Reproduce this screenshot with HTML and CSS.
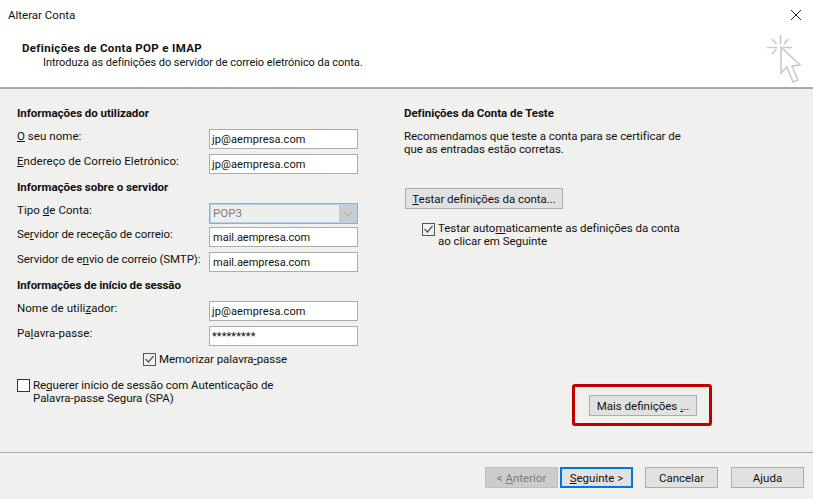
FILE: index.html
```html
<!DOCTYPE html>
<html lang="pt">
<head>
<meta charset="utf-8">
<title>Alterar Conta</title>
<link rel="stylesheet" href="styles.css">
</head>
<body>
<div class="dialog">
  <header class="header">
    <div class="titlebar">
      <span class="title">Alterar Conta</span>
      <svg class="close" width="12" height="12" viewBox="0 0 12 12"><path d="M1 1l10 10M11 1L1 11" stroke="#222" stroke-width="1" fill="none"/></svg>
    </div>
    <div class="head-row">
      <div class="head-text">
        <div class="head-title">Definições de Conta POP e IMAP</div>
        <div class="head-sub">Introduza as definições do servidor de correio eletrónico da conta.</div>
      </div>
      <svg class="wizard" width="36" height="52" viewBox="0 0 36 52">
        <g stroke="#c9c9c9" stroke-width="1.6" fill="none">
          <path d="M13.5 0v9M0 12.5h10M16 12.5h9M5 4l4.500 5M21 4l-4 5M5 19l4.500-5"/>
          <path d="M14 12V38l6-6 6 15 5-2-6-14 8-1z" stroke-linejoin="miter"/>
        </g>
      </svg>
    </div>
  </header>
  <main class="main">
    <section class="col-left">
      <h2 class="sec sec-1">Informações do utilizador</h2>
      <div class="row row-a"><label class="lab"><u>O</u> seu nome:</label><div class="field">jp@aempresa.com</div></div>
      <div class="row"><label class="lab"><u>E</u>ndereço de Correio Eletrónico:</label><div class="field">jp@aempresa.com</div></div>
      <h2 class="sec sec-2">Informações sobre o servidor</h2>
      <div class="row row-combo"><label class="lab">Tipo <u>d</u>e Conta:</label>
        <div class="combo"><span class="combo-val">POP3</span><span class="combo-btn"><svg width="10" height="6" viewBox="0 0 10 6"><path d="M1 1l4 4 4-4" stroke="#a8a8a8" fill="none"/></svg></span></div>
      </div>
      <div class="row row-b"><label class="lab tight">Se<u>r</u>vidor de receção de correio:</label><div class="field pad">mail.aempresa.com</div></div>
      <div class="row"><label class="lab tight">Servidor de e<u>n</u>vio de correio (SMTP):</label><div class="field pad">mail.aempresa.com</div></div>
      <h2 class="sec sec-3">Informações de início de sessão</h2>
      <div class="row row-c"><label class="lab">Nome de utili<u>z</u>ador:</label><div class="field">jp@aempresa.com</div></div>
      <div class="row"><label class="lab">Pa<u>l</u>avra-passe:</label><div class="field">*********</div></div>
      <div class="check check-mem"><span class="box"><svg width="11" height="11" viewBox="0 0 11 11"><path d="M1.5 5l3 3 5-6" stroke="#555" stroke-width="1.2" fill="none"/></svg></span><span class="check-text">Memorizar palavra<u>-</u>passe</span></div>
      <div class="check check-spa"><span class="box"></span><span class="check-text">Re<u>q</u>uerer início de sessão com Autenticação de<br>Palavra-passe Segura (SPA)</span></div>
    </section>
    <section class="col-right">
      <h2 class="sec">Definições da Conta de Teste</h2>
      <p class="para">Recomendamos que teste a conta para se certificar de<br>que as entradas estão corretas.</p>
      <button class="btn btn-test" type="button"><u>T</u>estar definições da conta...</button>
      <div class="check check-auto"><span class="box"><svg width="11" height="11" viewBox="0 0 11 11"><path d="M1.5 5l3 3 5-6" stroke="#555" stroke-width="1.2" fill="none"/></svg></span><span class="check-text">Testar auto<u>m</u>aticamente as definições da conta<br>ao clicar em Seguinte</span></div>
      <div class="more-wrap"><div class="highlight"><button class="btn btn-more" type="button">Mais definições <u>.</u>..</button></div></div>
    </section>
  </main>
  <footer class="footer">
    <button class="btn btn-foot disabled" type="button">&lt; <u>A</u>nterior</button>
    <button class="btn btn-foot primary" type="button"><u>S</u>eguinte &gt;</button>
    <button class="btn btn-foot gap" type="button">Cancelar</button>
    <button class="btn btn-foot gap2" type="button">Ajuda</button>
  </footer>
</div>
</body>
</html>
```
FILE: styles.css
```css
* { box-sizing: border-box; }
html, body { margin: 0; padding: 0; }
body {
  width: 813px; height: 499px; overflow: hidden;
  font: 11.5px/13px Roboto, sans-serif;
  color: #111; background: #f0f0ee;
}
u { text-underline-offset: 1px; }
.dialog { display: flex; flex-direction: column; width: 813px; height: 499px; }
.header { height: 89px; background: #fff; border-bottom: 2px solid #a9a9a9; padding: 0 12px 0 8px; flex: none; }
.titlebar { display: flex; justify-content: space-between; align-items: center; height: 30px; }
.close { margin-right: -1px; }
.head-row { display: flex; justify-content: space-between; padding-left: 14px; }
.head-text { padding-top: 11px; }
.head-title { font-weight: 700; line-height: 14px; letter-spacing: .33px; }
.head-sub { padding-left: 21px; line-height: 15px; font-size: 11px; letter-spacing: -.05px; }
.wizard { margin: 5px -2px 0 0; }
.main { flex: 1; display: flex; min-height: 0; padding-top: 17px; }
.col-left { width: 387px; margin-right: 17px; padding-left: 17px; flex: none; }
.col-right { flex: 1; display: flex; flex-direction: column; }
.sec { margin: 0; font-size: 11.5px; line-height: 14px; font-weight: 700; letter-spacing: -.03px; }
.sec-1 { margin-bottom: 9px; }
.sec-2 { margin-top: 6px; margin-bottom: 9px; }
.sec-3 { margin-top: 6px; margin-bottom: 9px; letter-spacing: -.1px; }
.row { display: flex; justify-content: space-between; width: 341px; height: 20px; margin-top: 5px; }
.row-a, .row-c { margin-top: 0; }
.row-combo { height: 21px; margin-top: 0; }
.row-b { margin-top: 3px; }
.lab { line-height: 14px; white-space: nowrap; letter-spacing: .05px; }
.tight { letter-spacing: -.08px; }
.field { width: 149px; height: 20px; background: #fff; border: 1px solid #acacac; padding: 0 2px; line-height: 19px; font-size: 11px; letter-spacing: .1px; }
.pad { padding-left: 3px; letter-spacing: 0; }
.combo { width: 149px; height: 21px; display: flex; border: 1px solid #a9a9a9; box-shadow: inset 0 0 0 1px #b5d0e8; padding: 1px; background: #eeeeec; color: #7d7d7d; }
.combo-val { flex: 1; padding-left: 2px; line-height: 17px; }
.combo-btn { width: 17px; background: #cbcbcb; display: flex; align-items: center; justify-content: center; }
.check { display: flex; align-items: flex-start; }
.check-text { letter-spacing: -.05px; }
.box { width: 13px; height: 13px; border: 1px solid #333; background: #fff; margin-right: 3px; flex: none; display: flex; align-items: center; justify-content: center; }
.check-mem { padding-left: 126px; margin-top: 7px; align-items: center; }
.check-mem .box { border-color: #555; background: transparent; }
.check-spa { margin-top: 13px; }
.para { margin: 10px 0 0; letter-spacing: -.05px; }
.btn {
  display: block; font: inherit; color: inherit; text-align: center; padding: 1px 0 0;
  background: #e1e1e1; border: 1px solid #adadad; border-radius: 0; height: 21px;
}
.btn-test { width: 158px; margin: 32px 0 0 1px; letter-spacing: -.05px; }
.check-auto { margin: 13px 0 0 18px; }
.check-auto .box { border-color: #555; background: transparent; margin-top: 1px; }
.more-wrap { flex: 1; display: flex; align-items: flex-end; padding: 0 0 26px 168px; }
.highlight { width: 140px; height: 42px; border: 3px solid #c00000; border-radius: 3px; padding: 8px 0 0 14px; }
.btn-more { width: 108px; }
.footer { flex: none; height: 47px; border-top: 1px solid #a9a9a9; display: flex; padding: 14px 0 0 485px; }
.btn-foot { width: 73px; }
.primary { margin-left: 2px; border: 2px solid #0078d7; }
.disabled { background: #cccccc; color: #7d7d7d; border-color: #bfbfbf; }
.gap { margin-left: 12px; }
.gap2 { margin-left: 13px; }
```
